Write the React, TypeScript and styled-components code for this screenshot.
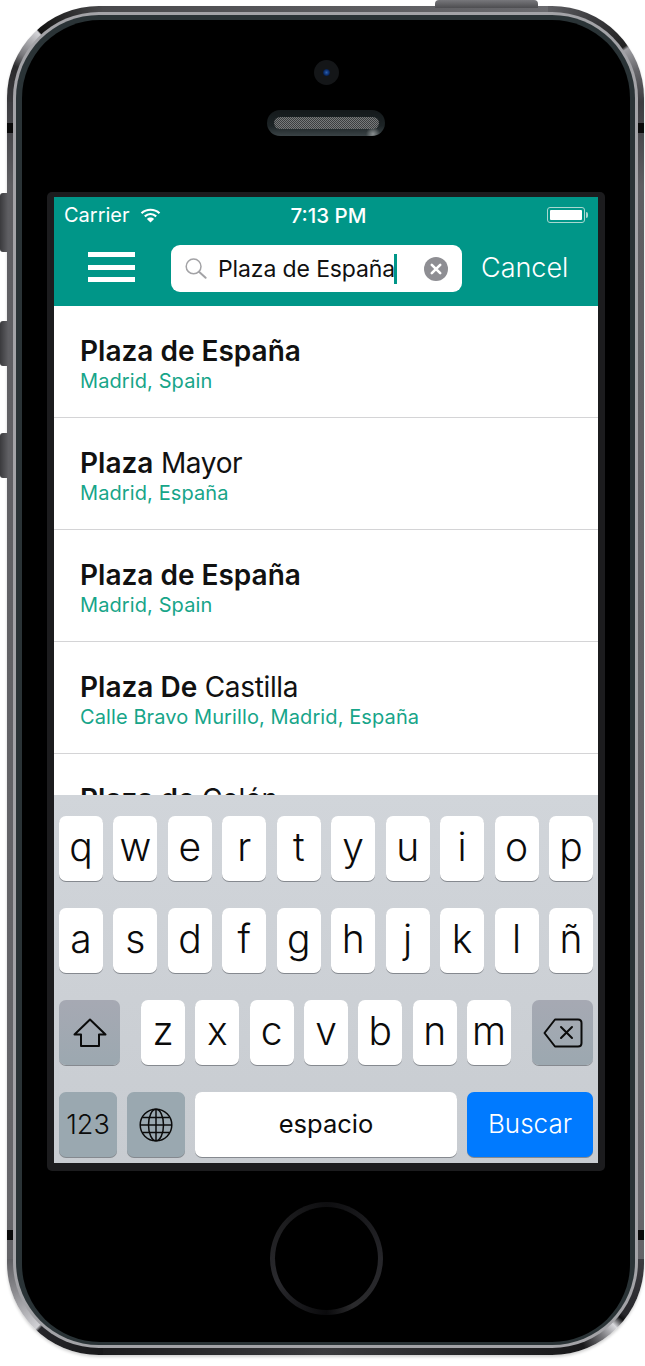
import React from 'react';
import styled, { createGlobalStyle } from 'styled-components';

const RESULTS = [
  { bold: 'Plaza de España', rest: '', place: 'Madrid, Spain' },
  { bold: 'Plaza', rest: ' Mayor', place: 'Madrid, España' },
  { bold: 'Plaza de España', rest: '', place: 'Madrid, Spain' },
  { bold: 'Plaza De', rest: ' Castilla', place: 'Calle Bravo Murillo, Madrid, España' },
  { bold: 'Plaza de', rest: ' Colón', place: '' },
];

const ROW_ONE = ['q', 'w', 'e', 'r', 't', 'y', 'u', 'i', 'o', 'p'];
const ROW_TWO = ['a', 's', 'd', 'f', 'g', 'h', 'j', 'k', 'l', 'ñ'];
const ROW_THREE = ['z', 'x', 'c', 'v', 'b', 'n', 'm'];

const WifiIcon = () => (
  <svg width="21" height="15" viewBox="0 0 21 15">
    <path d="M1.5 5.2C6.6 .6 14.4 .6 19.5 5.2" fill="none" stroke="#fff" strokeWidth="2.2" />
    <path d="M4.8 8.4C8.2 5.4 12.8 5.4 16.2 8.4" fill="none" stroke="#fff" strokeWidth="2.2" />
    <path d="M10.5 14.6L6.9 10.9C9 9 12 9 14.1 10.9Z" fill="#fff" />
  </svg>
);

const SearchIcon = () => (
  <svg width="22" height="21" viewBox="0 0 22 21">
    <circle cx="8.6" cy="8.4" r="7.4" fill="none" stroke="#a3a3a6" strokeWidth="1.5" />
    <path d="M14 13.8L20.6 19.8" stroke="#a3a3a6" strokeWidth="2" strokeLinecap="round" />
  </svg>
);

const ClearIcon = () => (
  <svg width="24" height="24" viewBox="0 0 24 24">
    <circle cx="12" cy="12" r="12" fill="#8e8e93" />
    <path d="M7.8 7.8L16.2 16.2M16.2 7.8L7.8 16.2" stroke="#fff" strokeWidth="2.6" strokeLinecap="round" />
  </svg>
);

const ShiftIcon = () => (
  <svg width="34" height="30" viewBox="0 0 34 30">
    <path
      d="M17 1.5L32.5 16.5H26V28H8V16.5H1.5Z"
      fill="none"
      stroke="#0b0b0b"
      strokeWidth="2"
      strokeLinejoin="round"
    />
  </svg>
);

const DeleteIcon = () => (
  <svg width="40" height="30" viewBox="0 0 40 30">
    <path
      d="M12 1.5H35C37 1.5 38.5 3 38.5 5V25C38.5 27 37 28.5 35 28.5H12L1.5 15Z"
      fill="none"
      stroke="#0b0b0b"
      strokeWidth="2"
      strokeLinejoin="round"
    />
    <path d="M18 9L29 20M29 9L18 20" stroke="#0b0b0b" strokeWidth="2" strokeLinecap="round" />
  </svg>
);

const GlobeIcon = () => (
  <svg width="34" height="34" viewBox="0 0 34 34" fill="none" stroke="#0b0b0b" strokeWidth="1.5">
    <circle cx="17" cy="17" r="15.8" />
    <ellipse cx="17" cy="17" rx="7.5" ry="15.8" />
    <path d="M17 1.2V32.8M1.2 17H32.8M3.4 9.5H30.6M3.4 24.5H30.6" />
  </svg>
);

export default function App() {
  return (
    <>
      <GlobalStyle />
      <Device>
        <TopButton />
        <SideButton $top={187} $height={59} />
        <SideButton $top={315} $height={45} />
        <SideButton $top={427} $height={45} />
        <Band $top={117} />
        <Band $top={1224} />
        <Rim>
          <InnerRim>
            <Face>
              <Camera>
                <Lens />
              </Camera>
              <Speaker>
                <Mesh />
              </Speaker>
              <ScreenFrame>
                <Screen>
                  <Header>
                    <StatusBar>
                      <Carrier>
                        Carrier
                        <WifiIcon />
                      </Carrier>
                      <Clock>7:13 PM</Clock>
                      <Battery>
                        <BatteryFill />
                      </Battery>
                    </StatusBar>
                    <NavBar>
                      <Burger>
                        <span />
                        <span />
                        <span />
                      </Burger>
                      <SearchBox>
                        <SearchIcon />
                        <SearchText>
                          Plaza de España
                          <Caret />
                        </SearchText>
                        <ClearIcon />
                      </SearchBox>
                      <CancelLabel>Cancel</CancelLabel>
                    </NavBar>
                  </Header>
                  <List>
                    {RESULTS.map((item, i) => (
                      <Row key={i}>
                        <Title>
                          <strong>{item.bold}</strong>
                          <span>{item.rest}</span>
                        </Title>
                        {item.place && <Place>{item.place}</Place>}
                      </Row>
                    ))}
                  </List>
                  <Keyboard>
                    <LetterRow>
                      {ROW_ONE.map(k => (
                        <Key key={k}>{k}</Key>
                      ))}
                    </LetterRow>
                    <LetterRow>
                      {ROW_TWO.map(k => (
                        <Key key={k}>{k}</Key>
                      ))}
                    </LetterRow>
                    <ShiftRow>
                      <FnKey>
                        <ShiftIcon />
                      </FnKey>
                      <MiddleKeys>
                        {ROW_THREE.map(k => (
                          <Key key={k}>{k}</Key>
                        ))}
                      </MiddleKeys>
                      <FnKey>
                        <DeleteIcon />
                      </FnKey>
                    </ShiftRow>
                    <BottomRow>
                      <BottomFnKey>123</BottomFnKey>
                      <BottomFnKey>
                        <GlobeIcon />
                      </BottomFnKey>
                      <SpaceKey>espacio</SpaceKey>
                      <SearchKey>Buscar</SearchKey>
                    </BottomRow>
                  </Keyboard>
                </Screen>
              </ScreenFrame>
              <HomeButton />
            </Face>
          </InnerRim>
        </Rim>
      </Device>
    </>
  );
}

const GlobalStyle = createGlobalStyle`
  html, body {
    margin: 0;
    padding: 0;
    background: #fff;
  }
  * {
    box-sizing: border-box;
  }
  #root {
    width: 645px;
    height: 1366px;
    padding: 6px 0 0 7px;
    overflow: hidden;
    font-family: Inter, "Liberation Sans", sans-serif;
  }
`;

// the metal edge: one conic tile per corner for the glints, strips for the straight runs
const Device = styled.div`
  position: relative;
  width: 637px;
  height: 1349px;
  padding: 6px 6px 7px;
  border-radius: 92px;
  background:
    conic-gradient(from 270deg at 100% 100%, #3a3a3d 0, #2a2a2c 22deg, #77777b 30deg, #d4d4d8 47deg, #111 48deg, #222 60deg, #49494c 90deg) 0 0 / 96px 96px no-repeat,
    conic-gradient(from 0deg at 0 100%, #5e5e62 0, #3a3a3d 30deg, #222 54deg, #a0a0a4 56deg, #66666a 70deg, #3c3c40 90deg) 100% 0 / 96px 96px no-repeat,
    conic-gradient(from 180deg at 100% 0, #18181a 0, #26262a 42deg, #d0d0d4 44deg, #8a8a8e 70deg, #5e5e62 90deg) 0 100% / 96px 96px no-repeat,
    conic-gradient(from 90deg at 0 0, #3c3c40 0, #26262a 36deg, #0c0c0e 39deg, #d8d8dc 45deg, #77777b 55deg, #18181a 68deg, #1c1c1e 90deg) 100% 100% / 96px 96px no-repeat,
    linear-gradient(90deg, #49494c, #6a6a6e) 50% 0 / calc(100% - 192px) 12px no-repeat,
    linear-gradient(90deg, #1c1c1e, #3a3a3d 50%, #1c1c1e) 50% 100% / calc(100% - 192px) 12px no-repeat,
    linear-gradient(180deg, #3c3c40 96px, #5e5e62 180px, #66666a 1200px, #5e5e62 100%);
  box-shadow: 0 2px 3px rgba(0, 0, 0, 0.18);
`;

const TopButton = styled.div`
  position: absolute;
  top: -6px;
  left: 428px;
  width: 103px;
  height: 8px;
  border-radius: 4px 4px 0 0;
  background: linear-gradient(180deg, #77777b, #4d4d50);
`;

const SideButton = styled.div<{ $top: number; $height: number }>`
  position: absolute;
  left: -7px;
  top: ${p => p.$top}px;
  width: 8px;
  height: ${p => p.$height}px;
  border-radius: 3px 0 0 3px;
  background: linear-gradient(90deg, #3a3a3d, #5e5e62);
`;

const Band = styled.div<{ $top: number }>`
  position: absolute;
  left: 0;
  right: 0;
  top: ${p => p.$top}px;
  height: 10px;
  background: linear-gradient(
    90deg,
    #0a0a0a 0,
    #0a0a0a 6px,
    transparent 6px,
    transparent calc(100% - 6px),
    #0a0a0a calc(100% - 6px)
  );
`;

const Rim = styled.div`
  position: relative;
  height: 100%;
  padding: 3px;
  border-radius: 86px;
  background: #a3a3a7;
`;

const InnerRim = styled.div`
  height: 100%;
  padding: 5px 5px 3px 6px;
  border-radius: 83px;
  background: #2a3336;
`;

const Face = styled.div`
  display: flex;
  flex-direction: column;
  align-items: center;
  height: 100%;
  padding-top: 40px;
  border-radius: 78px;
  background: #000;
`;

const Camera = styled.div`
  display: flex;
  align-items: center;
  justify-content: center;
  width: 25px;
  height: 25px;
  border-radius: 50%;
  background: #141618;
`;

const Lens = styled.div`
  width: 7px;
  height: 7px;
  border-radius: 50%;
  background: radial-gradient(circle, #2a5fb0 0, #0a2a66 55%, #04060c 100%);
`;

const Speaker = styled.div`
  display: flex;
  align-items: flex-start;
  justify-content: center;
  width: 118px;
  height: 26px;
  margin-top: 25px;
  padding-top: 7px;
  border-radius: 13px;
  background:
    radial-gradient(circle at 106px 24px, #8a8f90 0, rgba(138, 143, 144, 0) 7px),
    linear-gradient(180deg, #14191b 0, #1c2325 60%, #3a4346 100%);
`;

const Mesh = styled.div`
  width: 105px;
  height: 12px;
  border-radius: 6px;
  background: repeating-conic-gradient(#3c3e3f 0 25%, #777a7b 0 50%) 0 0 / 2px 2px;
`;

const ScreenFrame = styled.div`
  width: 558px;
  margin-top: 56px;
  padding: 5px 7px 8px;
  border-radius: 5px;
  background: #1c1c1e;
`;

const Screen = styled.div`
  display: flex;
  flex-direction: column;
  width: 544px;
  height: 966px;
  overflow: hidden;
  background: #fff;
`;

const Header = styled.header`
  flex: none;
  height: 109px;
  background: #009688;
  color: #fff;
`;

const StatusBar = styled.div`
  display: grid;
  grid-template-columns: 1fr auto 1fr;
  align-items: center;
  height: 36px;
  padding: 0 13px 0 10px;
  font-size: 20.5px;
`;

const Carrier = styled.div`
  display: flex;
  align-items: center;
  gap: 10px;
  font-size: 20px;
`;

const Clock = styled.div`
  margin-left: 8px;
  font-weight: 500;
`;

const Battery = styled.div`
  position: relative;
  justify-self: end;
  width: 38px;
  height: 16px;
  padding: 2px;
  border: 1px solid #a8d8d0;
  border-radius: 3px;
  &::after {
    content: '';
    position: absolute;
    right: -4px;
    top: 4px;
    width: 2px;
    height: 6px;
    border-radius: 0 2px 2px 0;
    background: #a8d8d0;
  }
`;

const BatteryFill = styled.div`
  height: 100%;
  border-radius: 1px;
  background: #fff;
`;

const NavBar = styled.div`
  display: flex;
  align-items: center;
  height: 73px;
  padding: 0 0 2px 34px;
`;

const Burger = styled.div`
  display: flex;
  flex-direction: column;
  justify-content: space-between;
  width: 47px;
  height: 30px;
  margin-bottom: 3px;
  > span {
    display: block;
    height: 5px;
    background: #fff;
  }
`;

const SearchBox = styled.div`
  display: flex;
  align-items: center;
  width: 291px;
  height: 47px;
  margin-left: 36px;
  padding: 0 14px;
  border-radius: 9px;
  background: #fff;
  color: #111;
`;

const SearchText = styled.div`
  display: flex;
  flex: 1;
  align-items: center;
  margin-left: 11px;
  font-size: 23px;
  letter-spacing: -0.12px;
`;

const Caret = styled.span`
  width: 3px;
  height: 30px;
  margin-left: -1px;
  background: #009688;
`;

const CancelLabel = styled.div`
  margin: 0 0 2px 19px;
  font-size: 27px;
  font-weight: 300;
`;

const List = styled.div`
  flex: 1;
  min-height: 0;
  overflow: hidden;
`;

const Row = styled.div`
  height: 112px;
  padding: 28px 0 0 26px;
  border-bottom: 1px solid #d4d4d6;
`;

const Title = styled.div`
  font-size: 28px;
  line-height: 34px;
  color: #111;
  strong {
    font-weight: 600;
  }
  span {
    letter-spacing: -0.35px;
  }
`;

const Place = styled.div`
  margin-top: 1px;
  font-size: 20px;
  line-height: 24px;
  letter-spacing: 0.1px;
  color: #17a589;
`;

const Keyboard = styled.div`
  display: flex;
  flex: none;
  flex-direction: column;
  gap: 27px;
  height: 368px;
  padding: 21px 5px 0;
  background: linear-gradient(180deg, #d1d5da 0, #c8ccd1 100%);
`;

const LetterRow = styled.div`
  display: grid;
  grid-template-columns: repeat(10, 44px);
  justify-content: space-between;
  height: 65px;
`;

const ShiftRow = styled.div`
  display: flex;
  justify-content: space-between;
  height: 65px;
`;

const MiddleKeys = styled.div`
  display: grid;
  grid-template-columns: repeat(7, 44px);
  justify-content: space-between;
  width: 370px;
`;

const BottomRow = styled.div`
  display: flex;
  gap: 10px;
  height: 65px;
`;

const KeyBase = styled.div`
  display: flex;
  align-items: center;
  justify-content: center;
  border-radius: 7px;
  box-shadow: 0 1px 0 #85898f;
  color: #0b0b0b;
`;

const Key = styled(KeyBase)`
  padding-bottom: 5px;
  background: #fff;
  font-size: 39px;
  font-weight: 300;
`;

const FnKey = styled(KeyBase)`
  width: 61px;
  background: linear-gradient(180deg, #a6a9b3 0, #9ca8b0 100%);
`;

const BottomFnKey = styled(KeyBase)`
  width: 58px;
  background: #9aa8b0;
  font-size: 27px;
  font-weight: 300;
`;

const SpaceKey = styled(KeyBase)`
  width: 262px;
  padding-bottom: 3px;
  background: #fff;
  font-size: 25.5px;
`;

const SearchKey = styled(KeyBase)`
  width: 126px;
  padding-bottom: 2px;
  background: #007aff;
  color: #fff;
  font-size: 26px;
  font-weight: 300;
`;

const HomeButton = styled.div`
  position: relative;
  width: 113px;
  height: 113px;
  margin: 31px 0 0 1px;
  border-radius: 50%;
  background: conic-gradient(#0e0e10, #26262a 25%, #2a2a2c 42%, #0a0a0c 50%, #2a2a2e 68%, #1e1e20 85%, #0e0e10);
  &::after {
    content: '';
    position: absolute;
    inset: 5px;
    border-radius: 50%;
    background: #000;
  }
`;
